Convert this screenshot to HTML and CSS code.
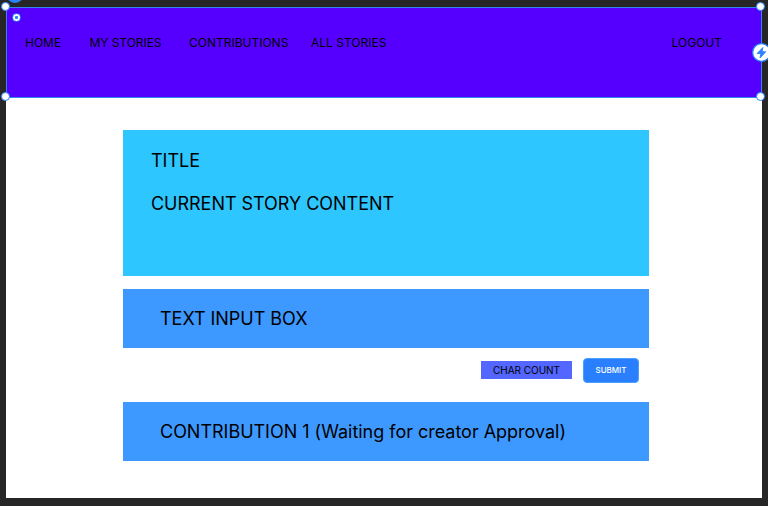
FILE: index.html
```html
<!DOCTYPE html>
<html lang="en"><head><meta charset="utf-8"><title>Stories</title><link rel="stylesheet" href="styles.css"></head>
<body>
<div class="page">
<header class="nav">
<nav class="links"><a>HOME</a><a>MY STORIES</a><a>CONTRIBUTIONS</a><a>ALL STORIES</a></nav><a class="logout">LOGOUT</a>
<i class="handle tl"></i><i class="handle tr"></i><i class="handle bl"></i><i class="handle br"></i><i class="origin"></i>
<svg class="bolt" viewBox="0 0 18 18"><circle cx="9" cy="9" r="8.4" fill="#fff" stroke="#2a82ff" stroke-width="1.2"/><path d="M10.300 4.300 4.800 10h3.600l-.8 4.200L13 8.300H9.500z" fill="#2a82ff" stroke="#2a82ff" stroke-width=".9" stroke-linejoin="round"/></svg>
</header>
<main class="content">
<section class="story"><h1>TITLE</h1><p>CURRENT STORY CONTENT</p></section>
<section class="box">TEXT INPUT BOX</section>
<div class="actions"><span class="count">CHAR COUNT</span><button class="submit">SUBMIT</button></div>
<section class="box">CONTRIBUTION 1 (Waiting for creator Approval)</section>
</main>
</div>
<i class="tab"></i>
</body></html>
```
FILE: styles.css
```css
* { box-sizing: border-box; }
body { margin: 0; height: 506px; padding: 7px 6px 8px; background: #262626; font-family: Inter, sans-serif; color: #000; overflow: hidden; }
.page { height: 491px; background: #fff; }
.nav { position: relative; height: 91px; background: #5500ff; border: 1px solid #3388ee; display: flex; justify-content: space-between; padding: 27px 39px 0 18px; font-size: 12px; line-height: 15px; }
.links { display: flex; }
.links a:nth-child(1) { width: 64.5px; }
.links a:nth-child(2) { width: 99.5px; letter-spacing: -.05px; }
.links a:nth-child(3) { width: 122px; }
.handle { position: absolute; width: 9px; height: 9px; border: 1px solid #2a82ff; border-radius: 50%; background: #fff; }
.tl { left: -6px; top: -6px; } .tr { right: -4px; top: -6px; }
.bl { left: -6px; bottom: -4px; } .br { right: -4px; bottom: -4px; }
.origin { position: absolute; left: 5px; top: 5px; width: 9px; height: 9px; border: 1px solid #2a82ff; border-radius: 50%; background: radial-gradient(circle, #2a82ff 1.3px, #fff 1.9px); }
.bolt { position: absolute; left: 745px; top: 35px; width: 19px; height: 19px; }
.content { width: 526px; margin: 32px 0 0 117px; font-size: 18px; line-height: 22px; letter-spacing: -.03px; }
.story { height: 146px; padding: 20px 28px; background: #2dc6ff; }
h1, p { margin: 0; font: inherit; }
p { margin-top: 21px; }
.box { height: 59px; margin-top: 13px; padding: 19px 37px; background: #3d99ff; white-space: nowrap; }
.actions + .box { letter-spacing: -.02px; }
.actions { height: 54px; padding: 9.500px 10px 0 0; display: flex; justify-content: flex-end; gap: 11px; }
.actions + .box { margin-top: 0; }
.count { width: 91px; height: 18px; margin-top: 3.500px; background: #5366ff; font-size: 10px; line-height: 19px; text-align: center; }
.submit { width: 56px; height: 25px; padding: 0 0 1px; border: 1px solid #4b9fff; border-radius: 4px; background: #2a7fff; color: #fff; font: 500 8px Inter, sans-serif; }
.tab { position: absolute; left: 6px; top: -15px; width: 18px; height: 18px; border-radius: 50%; background: #2a82ff; }
```
